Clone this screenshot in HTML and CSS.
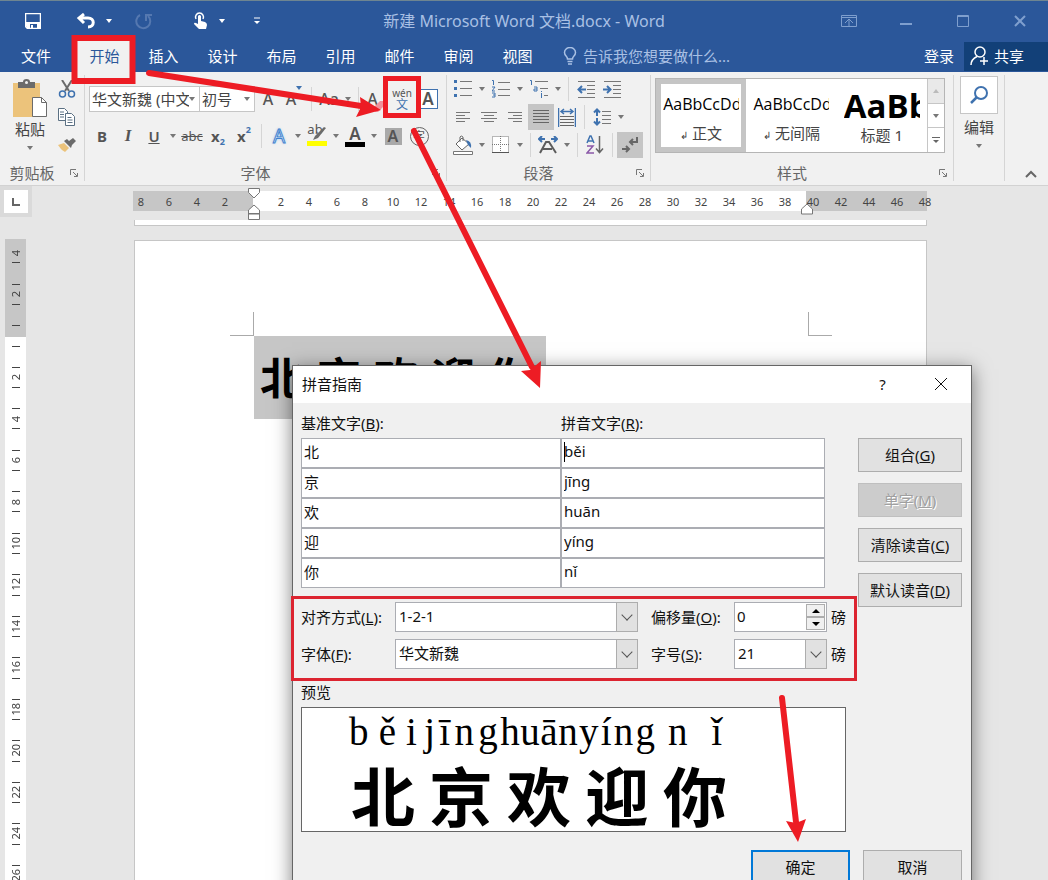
FILE: index.html
```html
<!DOCTYPE html>
<html lang="zh-CN">
<head>
    <meta charset="UTF-8">
    <meta name="viewport" content="width=device-width, initial-scale=1.0">
    <title>新建 Microsoft Word 文档.docx - Word</title>
    <link rel="stylesheet" href="styles.css">
</head>
<body>
<div class="app">

    <header class="titlebar">
        <div class="quick">
            <button class="q-save" aria-label="保存"><svg width="16" height="16" viewBox="0 0 16 16"><path d="M.5.5h15v15h-13l-2-2z" fill="none" stroke="#fff" stroke-width="1.500"/><path d="M1 9h14v6h-3v-4H5v4H2l-1-2z" fill="#fff"/><path d="M6 12h2v3H6z" fill="#fff"/></svg></button>
            <button class="q-undo" aria-label="撤消"><svg width="20" height="16" viewBox="0 0 20 16"><path d="M8 1L3 5l5 5M3 5h9c7 0 7 9 0 9" fill="none" stroke="#fff" stroke-width="3"/></svg></button>
            <button class="q-caret" aria-label="撤消选项"><i class="caret"></i></button>
            <button class="q-redo" aria-label="重复"><svg width="18" height="18" viewBox="0 0 18 18"><path d="M5 3a7 7 0 1 0 8 1M11 9V3h6" fill="none" stroke="#5578b0" stroke-width="2"/></svg></button>
            <button class="q-touch" aria-label="触摸模式"><svg width="14" height="18" viewBox="0 0 14 18"><path d="M2 7a4 4 0 1 1 7 0" fill="none" stroke="#fff" stroke-width="1.500"/><path d="M4 4q1.500-2 3 0v5l4 1q2 1 2 3l-1 4H5l-5-5q0-2 2-1l2 1z" fill="#fff"/></svg></button>
            <button class="q-caret" aria-label="触摸选项"><i class="caret"></i></button>
            <button class="q-more" aria-label="自定义"><svg width="8" height="8" viewBox="0 0 8 8"><path d="M1 1h6" stroke="#fff"/><path d="M1 4h6l-3 3z" fill="#fff"/></svg></button>
        </div>
        <span class="doc-title">新建 Microsoft Word 文档.docx - Word</span>
        <div class="win-buttons">
            <button aria-label="功能区显示选项"><svg width="16" height="14" viewBox="0 0 16 14"><path d="M.5 1.500h15v11H.5zM1 3.500h14M8 12V5M4 9l4-4 4 4" fill="none" stroke="#7f9fce"/></svg></button>
            <button aria-label="最小化"><svg width="14" height="14" viewBox="0 0 14 14"><path d="M1 10h12" stroke="#7f9fce" stroke-width="2"/></svg></button>
            <button aria-label="最大化"><svg width="14" height="14" viewBox="0 0 14 14"><path d="M1.500 1.500h11v11h-11zM1 2.500h12" fill="none" stroke="#7f9fce"/></svg></button>
            <button aria-label="关闭"><svg width="14" height="14" viewBox="0 0 14 14"><path d="M2 2l10 10M12 2L2 12" stroke="#7f9fce" stroke-width="2"/></svg></button>
        </div>
    </header>

    <nav class="tabs">
        <button class="file">文件</button>
        <button class="active">开始</button>
        <button>插入</button>
        <button>设计</button>
        <button>布局</button>
        <button>引用</button>
        <button>邮件</button>
        <button>审阅</button>
        <button>视图</button>
        <a class="tell-me" href="#"><svg width="14" height="18" viewBox="0 0 14 18"><path d="M4.500 12c0-3-3-3-3-6.500a5.500 5 0 0 1 11 0c0 3.500-3 3.500-3 6.500zM4.500 14.500h5M5 17h4" fill="none" stroke="#a9c0e4" stroke-width="1.500"/></svg>告诉我您想要做什么...</a>
        <a class="login" href="#">登录</a>
        <button class="share"><svg width="19" height="20" viewBox="0 0 19 20"><circle cx="10" cy="6" r="5" fill="none" stroke="#fff" stroke-width="1.500"/><path d="M1 19c0-5 3-7 6-8.500M14 11v8M10 15h8" fill="none" stroke="#fff" stroke-width="1.500"/></svg>共享</button>
    </nav>

    <section class="ribbon">
        <!-- 剪贴板 -->
        <div class="group clipboard">
            <div class="content">
                <button class="paste">
                    <svg width="36" height="40" viewBox="0 0 36 40"><path d="M1 4h27v34H1z" fill="#ecc37b"/><path d="M6 3h5q0-3 3.500-3T18 3h5v6H6z" fill="#6b6b6b"/><circle cx="14.500" cy="3.500" r="1.500" fill="#f1f1f1"/><path d="M20.500 18.500h9l5 5v14h-14z" fill="#fff" stroke="#6b6b6b"/><path d="M29.500 18.500v5h5" fill="none" stroke="#6b6b6b"/></svg>
                    <span>粘贴</span>
                    <i class="caret"></i>
                </button>
                <div class="clip-tools">
                    <button aria-label="剪切"><svg width="18" height="18" viewBox="0 0 18 18"><path d="M4 0l7 11M14 0L7 11" stroke="#6b6b6b" stroke-width="2"/><circle cx="4.500" cy="14" r="3" fill="none" stroke="#3f72af" stroke-width="1.500"/><circle cx="13.500" cy="14" r="3" fill="none" stroke="#3f72af" stroke-width="1.500"/></svg></button>
                    <button aria-label="复制"><svg width="18" height="18" viewBox="0 0 18 18"><path d="M.5.5h6l3 3v9h-9zM2 4h4M2 6.500h4M2 9h4" fill="#fff" stroke="#5b7083"/><path d="M7.500 5.500h6l3 3v9h-9zM9.500 9.500h4M9.500 12h5M9.500 14.500h5" fill="#fff" stroke="#5b7083"/></svg></button>
                    <button aria-label="格式刷"><svg width="18" height="16" viewBox="0 0 18 16"><path d="M0 8l6-2 5 5-4 4-3-2-1-1z" fill="#ecc37b"/><path d="M6 4l7 7 1-3 4-4-3-3-4 3-2-2z" fill="#6b6b6b"/></svg></button>
                </div>
            </div>
            <div class="label"><span>剪贴板</span><button class="launcher" aria-label="剪贴板选项"><svg width="8" height="8" viewBox="0 0 8 8"><path d="M.5 6V.5H6M3 3l4 4M7.500 4v3.500H4" fill="none" stroke="#777"/></svg></button></div>
        </div>

        <!-- 字体 -->
        <div class="group font">
            <div class="content">
                <div class="row">
                    <div class="combo name"><input type="text" value="华文新魏 (中文正文)" aria-label="字体"><i class="caret"></i></div>
                    <div class="combo size"><input type="text" value="初号" aria-label="字号"><i class="caret"></i></div>
                    <button class="ico letter" aria-label="增大字号">A</button>
                    <button class="ico letter shrink" aria-label="减小字号">A<svg width="6" height="4" viewBox="0 0 6 4"><path d="M0 0h6L3 4z" fill="#3f72af"/></svg></button>
                    <span class="sep"></span>
                    <button class="ico letter">Aa</button><button class="drop" aria-label="更改大小写"><i class="caret"></i></button>
                    <span class="sep"></span>
                    <button class="ico letter clear" aria-label="清除格式">A<svg width="12" height="12" viewBox="0 0 12 12"><path d="M0 8l7-7h5v4l-7 7H2z" fill="#f1919b"/></svg></button>
                    <button class="ico pinyin"><span>wén</span><span class="wen">文</span></button>
                    <button class="ico" aria-label="字符边框"><span class="boxed">A</span></button>
                </div>
                <div class="row">
                    <button class="ico bold">B</button>
                    <button class="ico italic">I</button>
                    <button class="ico under">U</button><button class="drop" aria-label="下划线选项"><i class="caret"></i></button>
                    <button class="ico strike">abc</button>
                    <button class="ico script">x<sub>2</sub></button>
                    <button class="ico script">x<sup>2</sup></button>
                    <span class="sep"></span>
                    <button class="ico effect">A</button><button class="drop" aria-label="文本效果选项"><i class="caret"></i></button>
                    <button class="ico mark"><span>ab</span><svg width="20" height="20" viewBox="0 0 20 20"><path d="M19 2l-8 10-5 2 2-4 9-9z" fill="#6b6b6b"/><path d="M0 15h20v5H0z" fill="#ff0"/></svg></button><button class="drop" aria-label="突出显示颜色"><i class="caret"></i></button>
                    <button class="ico"><span class="color">A</span></button><button class="drop" aria-label="字体颜色选项"><i class="caret"></i></button>
                    <button class="ico"><span class="shade">A</span></button>
                    <button class="ico"><span class="circled">字</span></button>
                </div>
            </div>
            <div class="label"><span>字体</span><button class="launcher" aria-label="字体设置"><svg width="8" height="8" viewBox="0 0 8 8"><path d="M.5 6V.5H6M3 3l4 4M7.500 4v3.500H4" fill="none" stroke="#777"/></svg></button></div>
        </div>

        <!-- 段落 -->
        <div class="group para">
            <div class="content">
                <div class="row">
                    <button class="ico" aria-label="项目符号"><svg width="18" height="18" viewBox="0 0 18 18"><path d="M0 0h3v3H0zM0 7h3v3H0zM0 14h3v3H0z" fill="#3f72af"/><path d="M6 1.500h12M6 8.500h12M6 15.500h12" stroke="#777"/></svg></button><button class="drop" aria-label="项目符号库"><i class="caret"></i></button>
                    <button class="ico" aria-label="编号"><svg width="18" height="18" viewBox="0 0 18 18"><path d="M0 .5h1.500V5M0 7h3l-3 4h3M0 13h3v4H0m1-2h2" fill="none" stroke="#3f72af"/><path d="M6 2.500h12M6 9.500h12M6 15.500h12" stroke="#777"/></svg></button><button class="drop" aria-label="编号库"><i class="caret"></i></button>
                    <button class="ico" aria-label="多级列表"><svg width="18" height="18" viewBox="0 0 18 18"><path d="M0 .5h1.500V5M4 7h3v4H4V9h3M11.500 11v1m0 1v5" fill="none" stroke="#3f72af"/><path d="M5 1.500h13M10 8.500h8M14 15.500h4" stroke="#777"/></svg></button><button class="drop" aria-label="多级列表库"><i class="caret"></i></button>
                    <span class="sep"></span>
                    <button class="ico" aria-label="减少缩进量"><svg width="18" height="17" viewBox="0 0 18 17"><path d="M1 .5h17M10 4.500h8M10 8.500h8M10 12.500h8M1 16.500h17" stroke="#777"/><path d="M9 8.500H2M5 5L1.500 8.500 5 12" fill="none" stroke="#3f72af" stroke-width="2"/></svg></button>
                    <button class="ico" aria-label="增加缩进量"><svg width="18" height="17" viewBox="0 0 18 17"><path d="M1 .5h17M10 4.500h8M10 8.500h8M10 12.500h8M1 16.500h17" stroke="#777"/><path d="M0 8.500h7M4 5l3.500 3.500L4 12" fill="none" stroke="#3f72af" stroke-width="2"/></svg></button>
                </div>
                <div class="row">
                    <button class="ico" aria-label="左对齐"><svg width="16" height="12" viewBox="0 0 16 12"><path d="M1 1.500h14M1 4.500h9M1 7.500h14M1 10.500h9" stroke="#777"/></svg></button>
                    <button class="ico" aria-label="居中"><svg width="16" height="12" viewBox="0 0 16 12"><path d="M0 1.500h16M3 4.500h10M0 7.500h16M3 10.500h10" stroke="#777"/></svg></button>
                    <button class="ico" aria-label="右对齐"><svg width="16" height="12" viewBox="0 0 16 12"><path d="M1 1.500h14M6 4.500h9M1 7.500h14M6 10.500h9" stroke="#777"/></svg></button>
                    <button class="ico on" aria-label="两端对齐"><svg width="16" height="14" viewBox="0 0 16 14"><path d="M0 .5h16M0 3.500h16M0 6.500h16M0 9.500h16M0 12.500h16" stroke="#666"/></svg></button>
                    <button class="ico" aria-label="分散对齐"><svg width="18" height="19" viewBox="0 0 18 19"><path d="M.5 0v19M17.500 0v19M4 3.500h10M6 1L3 3.500 6 6M12 1l3 2.500L12 6" fill="none" stroke="#3f72af" stroke-width="1.500"/><path d="M2 8.500h14M2 11.500h14M2 14.500h14M2 17.500h14" stroke="#666"/></svg></button>
                    <span class="sep"></span>
                    <button class="ico" aria-label="行距"><svg width="18" height="18" viewBox="0 0 18 18"><path d="M4 2v6M1 4.500l3-3 3 3M4 10v6M1 13.500l3 3 3-3" fill="none" stroke="#3f72af" stroke-width="2"/><path d="M9 3.500h9M9 7.500h9M9 11.500h9M9 15.500h9" stroke="#777"/></svg></button><button class="drop" aria-label="行距选项"><i class="caret"></i></button>
                </div>
                <div class="row">
                    <button class="ico" aria-label="底纹"><svg width="20" height="20" viewBox="0 0 20 20"><path d="M9 3l7 6-7 6-6-6zM7 7V2q1-2 3 0v4" fill="#fff" stroke="#666"/><path d="M13 5q6 1 5 8l-3-3z" fill="#3f72af"/><path d="M.5 16.500h19v3H.5z" fill="#fff" stroke="#777"/></svg></button><button class="drop" aria-label="底纹选项"><i class="caret"></i></button>
                    <button class="ico" aria-label="边框"><svg width="18" height="18" viewBox="0 0 18 18"><path d="M.5.5h16v16H.5zM8.500 0v16M0 8.500h17" fill="#fff" stroke="#777" stroke-dasharray="1 1"/><path d="M0 16.500h17" stroke="#555"/></svg></button><button class="drop" aria-label="边框选项"><i class="caret"></i></button>
                    <span class="sep"></span>
                    <button class="ico" aria-label="中文版式"><svg width="20" height="18" viewBox="0 0 20 18"><path d="M1 3h6M4 0L1 3l3 3M13 3h6M16 0l3 3-3 3" fill="none" stroke="#3f72af" stroke-width="2"/><path d="M2 17l6-11h3l7 11M5 13h9" fill="none" stroke="#5c5c5c" stroke-width="2"/></svg></button><button class="drop" aria-label="中文版式选项"><i class="caret"></i></button>
                    <span class="sep"></span>
                    <button class="ico" aria-label="排序"><svg width="18" height="20" viewBox="0 0 18 20"><path d="M1 8l3-7h1l3 7M2 6h5" fill="none" stroke="#3f72af" stroke-width="1.500"/><path d="M1 11h6l-6 7h7" fill="none" stroke="#8a58a8" stroke-width="1.500"/><path d="M13.500 1v16M10 13.500l3.500 4 3.500-4" fill="none" stroke="#666" stroke-width="1.500"/></svg></button>
                    <span class="sep"></span>
                    <button class="ico on" aria-label="显示编辑标记"><svg width="18" height="16" viewBox="0 0 18 16"><path d="M16 0v5H9M12 2L9 5l3 3M1 12h7M5 9l3 3-3 3" fill="none" stroke="#666" stroke-width="2"/></svg></button>
                </div>
            </div>
            <div class="label"><span>段落</span><button class="launcher" aria-label="段落设置"><svg width="8" height="8" viewBox="0 0 8 8"><path d="M.5 6V.5H6M3 3l4 4M7.500 4v3.500H4" fill="none" stroke="#777"/></svg></button></div>
        </div>

        <!-- 样式 -->
        <div class="group styles">
            <div class="content">
                <div class="gallery">
                    <button class="style selected"><span class="sample">AaBbCcDd</span><span class="style-name"><small>↲</small> 正文</span></button>
                    <button class="style"><span class="sample">AaBbCcDd</span><span class="style-name"><small>↲</small> 无间隔</span></button>
                    <button class="style"><span class="sample big">AaBb</span><span class="style-name">标题 1</span></button>
                    <div class="scroller">
                        <button class="off" aria-label="上一行"><i class="caret up"></i></button>
                        <button aria-label="下一行"><i class="caret"></i></button>
                        <button aria-label="其他"><svg width="8" height="7" viewBox="0 0 8 7"><path d="M0 .5h8" stroke="#666"/><path d="M1 3h6L4 6z" fill="#666"/></svg></button>
                    </div>
                </div>
            </div>
            <div class="label"><span>样式</span><button class="launcher" aria-label="样式窗格"><svg width="8" height="8" viewBox="0 0 8 8"><path d="M.5 6V.5H6M3 3l4 4M7.500 4v3.500H4" fill="none" stroke="#777"/></svg></button></div>
        </div>

        <div class="group edit">
            <button class="find">
                <span class="find-icon"><svg width="20" height="20" viewBox="0 0 20 20"><circle cx="12" cy="8" r="6" fill="none" stroke="#3f72af" stroke-width="2"/><path d="M8 12l-6 6" stroke="#3f72af" stroke-width="2.500"/></svg></span>
                <span>编辑</span>
                <i class="caret"></i>
            </button>
        </div>
        <button class="collapse" aria-label="折叠功能区"><svg width="12" height="8" viewBox="0 0 12 8"><path d="M1 7l5-5 5 5" fill="none" stroke="#666" stroke-width="2"/></svg></button>
    </section>

    <main class="workspace">
        <aside class="side">
            <button class="tab-stop" aria-label="制表符"><svg width="8" height="8" viewBox="0 0 8 8"><path d="M1 0v7h7" fill="none" stroke="#666" stroke-width="2"/></svg></button>
            <div class="v-ruler"><div class="v-marks" id="vMarks"></div></div>
        </aside>
        <div class="canvas">
            <div class="h-ruler">
                <div class="h-marks" id="hMarks"></div>
                <svg class="indent left" width="12" height="32" viewBox="0 0 12 32"><path d="M.5.500h11v4L6 10 .5 4.500zM6 17l5.500 5v4H.5v-4zM.5 25.500h11v6H.5z" fill="#fff" stroke="#777"/></svg>
                <svg class="indent right" width="12" height="12" viewBox="0 0 12 12"><path d="M6 1l5.500 5v5H.5V6z" fill="#fff" stroke="#777"/></svg>
            </div>
            <div class="sheet-end"></div>
            <div class="sheet">
                <div class="crop"><span class="crop-left"></span><span class="crop-right"></span></div>
                <p class="selection"><span>北</span><span>京</span><span>欢</span><span>迎</span><span>你</span></p>
            </div>
        </div>
    </main>

    <div class="dialog" role="dialog" aria-labelledby="dlgTitle">
        <div class="dlg-title">
            <span id="dlgTitle">拼音指南</span>
            <button>?</button>
            <button aria-label="关闭对话框"><svg width="14" height="14" viewBox="0 0 14 14"><path d="M1 1l12 12M13 1L1 13" stroke="#111"/></svg></button>
        </div>
        <div class="dlg-body">
            <div class="dlg-main">
                <div class="pairs">
                    <label for="base1">基准文字(<u>B</u>):</label>
                    <label for="py1">拼音文字(<u>R</u>):</label>
                    <input type="text" id="base1" value="北"><div class="first"><input type="text" id="py1" value="běi"></div>
                    <input type="text" aria-label="基准文字 2" value="京"><input type="text" aria-label="拼音文字 2" value="jīng">
                    <input type="text" aria-label="基准文字 3" value="欢"><input type="text" aria-label="拼音文字 3" value="huān">
                    <input type="text" aria-label="基准文字 4" value="迎"><input type="text" aria-label="拼音文字 4" value="yíng">
                    <input type="text" aria-label="基准文字 5" value="你"><input type="text" aria-label="拼音文字 5" value="nǐ">
                </div>

                <div class="options">
                    <label for="align">对齐方式(<u>L</u>):</label>
                    <div class="select"><select id="align"><option>1-2-1</option></select></div>
                    <label class="second" for="offset">偏移量(<u>O</u>):</label>
                    <div class="spin">
                        <input type="number" id="offset" value="0">
                        <div class="spin-buttons">
                            <button aria-label="增加"><svg width="8" height="4" viewBox="0 0 8 4"><path d="M0 4l4-4 4 4z"/></svg></button>
                            <button aria-label="减少"><svg width="8" height="4" viewBox="0 0 8 4"><path d="M0 0l4 4 4-4z"/></svg></button>
                        </div>
                    </div>
                    <span class="unit">磅</span>

                    <label for="face">字体(<u>F</u>):</label>
                    <div class="select"><select id="face"><option>华文新魏</option></select></div>
                    <label class="second" for="points">字号(<u>S</u>):</label>
                    <div class="select"><select id="points"><option>21</option></select></div>
                    <span class="unit">磅</span>
                </div>

                <div class="preview-label">预览</div>
                <div class="preview">
                    <div class="syllable"><div class="py"><span>b</span><span>ě</span><span>i</span></div><div class="hz">北</div></div>
                    <div class="syllable"><div class="py"><span>j</span><span>ī</span><span>n</span><span>g</span></div><div class="hz">京</div></div>
                    <div class="syllable"><div class="py"><span>h</span><span>u</span><span>ā</span><span>n</span></div><div class="hz">欢</div></div>
                    <div class="syllable"><div class="py"><span>y</span><span>í</span><span>n</span><span>g</span></div><div class="hz">迎</div></div>
                    <div class="syllable"><div class="py"><span>n</span><span>ǐ</span></div><div class="hz">你</div></div>
                </div>
            </div>
            <div class="dlg-side">
                <button class="btn">组合(<u>G</u>)</button>
                <button class="btn" disabled>单字(<u>M</u>)</button>
                <button class="btn">清除读音(<u>C</u>)</button>
                <button class="btn">默认读音(<u>D</u>)</button>
            </div>
        </div>
        <div class="dlg-footer">
            <button class="btn default">确定</button>
            <button class="btn">取消</button>
        </div>
    </div>

    <!-- red step marks over the window -->
    <svg class="steps" width="1048" height="880" viewBox="0 0 1048 880">
        <g fill="none" stroke="#ed1c24">
            <rect x="74.500" y="38" width="58" height="43" stroke-width="6"/>
            <rect x="385.500" y="78.500" width="33" height="37" stroke-width="5"/>
            <rect x="292.500" y="597.500" width="563" height="82" stroke="#dc2430" stroke-width="3"/>
            <path d="M149 73l212 33M414 131l118 236M782 698l14 124" stroke-width="6" stroke-linecap="round"/>
        </g>
        <path d="M381 110l-21-13 1 10-5 10zM540 388l-19-17 9-1 11-9zM798 842l-12-21 10 2 10-4z" fill="#ed1c24"/>
    </svg>
</div>

<script>
    // horizontal ruler: 8 to 0 in the margin, then up to 48
    const hMarks = document.getElementById('hMarks');
    for (let n = -8; n <= 48; n += 2) {
        const mark = document.createElement('span');
        mark.textContent = n === 0 ? '' : Math.abs(n);
        hMarks.appendChild(mark);
    }

    // vertical ruler
    const vMarks = document.getElementById('vMarks');
    for (let n = -4; n <= 26; n += 2) {
        const mark = document.createElement('div');
        const text = document.createElement('span');
        text.textContent = n === 0 ? '' : Math.abs(n);
        mark.appendChild(text);
        vMarks.appendChild(mark);
    }
</script>
</body>
</html>
```
FILE: styles.css
```css
*, *::before, *::after {
    box-sizing: border-box;
}
body {
    margin: 0;
    font-family: "Noto Sans", "Noto Sans CJK SC", sans-serif;
    font-size: 15px;
    line-height: 20px;
    color: #111;
}
button, input, select {
    font: inherit;
    color: inherit;
    margin: 0;
    padding: 0;
    border: 0;
    background: none;
    border-radius: 0;
    outline: none;
}
a {
    color: inherit;
    text-decoration: none;
}
svg {
    display: block;
    flex: none;
}

.app {
    position: relative;
    display: flex;
    flex-direction: column;
    height: 100vh;
    overflow: hidden;
    background: #e6e6e6;
}
.caret {
    display: block;
    flex: none;
    border: 3px solid transparent;
    border-top: 4px solid #777;
    border-bottom: 0;
}
.caret.up {
    border-top: 0;
    border-bottom: 4px solid #bbb;
}

/* title bar */
.titlebar {
    display: grid;
    grid-template-columns: 1fr auto 1fr;
    align-items: center;
    height: 40px;
    flex: none;
    background: #2b579a;
    border-top: 1px solid #6e8591;
}
.titlebar button {
    display: flex;
    justify-content: center;
    align-items: center;
    height: 34px;
}
.quick {
    display: flex;
    padding-left: 13px;
}
.q-save {
    width: 40px;
}
.quick .q-undo {
    width: 46px;
    padding-left: 20px;
}
.q-caret {
    width: 20px;
}
.q-redo, .q-more {
    width: 50px;
}
.quick .q-touch {
    width: 43px;
    padding-left: 20px;
}
.quick .caret {
    border-top-color: #fff;
}
.doc-title {
    font-size: 16px;
    color: #a9c0e4;
}
.win-buttons {
    display: flex;
    justify-content: flex-end;
}
.win-buttons button {
    width: 57px;
}

/* tabs */
.tabs {
    display: flex;
    height: 32px;
    flex: none;
    background: #2b579a;
    color: #fff;
}
.tabs button {
    width: 59px;
    padding-bottom: 1px;
}
.tabs .file {
    width: 75px;
    padding-right: 3px;
}
.tabs .active {
    background: #f1f1f1;
    color: #2b579a;
}
.tell-me {
    display: flex;
    align-items: center;
    gap: 6px;
    padding-left: 16px;
    color: #a9c0e4;
}
.login {
    display: flex;
    align-items: center;
    margin-left: auto;
    padding: 0 10px;
}
.tabs .share {
    display: flex;
    align-items: center;
    gap: 5px;
    width: 84px;
    padding: 0 0 2px 6px;
    margin: 2px 0 1px;
    background: #124078;
}

/* ribbon */
.ribbon {
    display: flex;
    flex: none;
    height: 114px;
    padding: 3px 0 4px;
    background: #f1f1f1;
    border-bottom: 1px solid #d2d2d2;
    color: #444;
}
.group {
    display: flex;
    flex-direction: column;
    border-right: 1px solid #d5d5d5;
}
.content {
    flex: 1;
}
.label {
    display: flex;
    align-items: center;
    line-height: 16px;
    color: #666;
}
.label span {
    flex: 1;
    padding-right: 6px;
    text-align: center;
}
.launcher {
    margin-right: 6px;
}
.row {
    display: flex;
    align-items: center;
}
.ico {
    display: flex;
    justify-content: center;
    align-items: center;
    width: 26px;
    height: 26px;
    color: #555;
}
.ico.on {
    background: #c5c5c5;
}
.drop {
    display: flex;
    justify-content: center;
    width: 12px;
}
.sep {
    width: 1px;
    height: 24px;
    margin: 0 4px;
    background: #d5d5d5;
}

.clipboard {
    width: 85px;
}
.clipboard .content {
    display: flex;
}
.paste {
    display: flex;
    flex-direction: column;
    align-items: center;
    width: 56px;
    padding-top: 4px;
    padding-left: 4px;
}
.paste .caret {
    margin-top: 7px;
}
.clip-tools button {
    display: flex;
    align-items: center;
    justify-content: center;
    width: 22px;
    height: 28px;
}

.font {
    width: 362px;
}
.font .content {
    display: flex;
    flex-direction: column;
    gap: 11px;
    padding: 11px 0 0 4px;
}
.combo {
    display: flex;
    align-items: center;
    height: 26px;
    padding: 0 4px 0 2px;
    background: #fff;
    border: 1px solid #c6c6c6;
}
.combo input {
    flex: 1;
    min-width: 0;
}
.combo.name {
    width: 111px;
}
.combo.size {
    width: 56px;
    margin-left: -1px;
}
.letter {
    font-size: 16px;
    font-weight: 500;
}
.shrink svg {
    align-self: flex-start;
}
.clear svg {
    align-self: flex-end;
    margin-left: -5px;
}
.pinyin {
    flex-direction: column;
    font-size: 10px;
    line-height: 10px;
}
.wen {
    font-size: 12px;
    line-height: 13px;
    color: #3f72af;
}
.boxed {
    width: 19px;
    border: 1px solid #3f72af;
    background: #fff;
    font-size: 17px;
    font-weight: 600;
    line-height: 18px;
}
.bold {
    font-weight: 700;
}
.italic {
    font-family: "Liberation Serif", serif;
    font-size: 17px;
    font-style: italic;
    font-weight: 700;
}
.under {
    font-weight: 600;
    text-decoration: underline;
}
.strike {
    font-size: 13px;
    text-decoration: line-through;
}
.script {
    font-weight: 700;
}
.script sub, .script sup {
    font-size: 9px;
    line-height: 14px;
    color: #3f72af;
}
.script sub {
    align-self: flex-end;
}
.script sup {
    align-self: flex-start;
}
.effect {
    font-size: 19px;
    color: #fff;
    -webkit-text-stroke: 1px #3f82cf;
    text-shadow: 0 0 3px #8ab8ea;
}
.mark {
    position: relative;
    font-size: 13px;
}
.mark span {
    align-self: flex-start;
    padding-right: 4px;
    line-height: 12px;
}
.mark svg {
    position: absolute;
    left: 3px;
    top: 3px;
}
.color {
    width: 20px;
    border-bottom: 5px solid #000;
    font-size: 17px;
    font-weight: 600;
    line-height: 17px;
}
.shade {
    width: 17px;
    background: #a9a9a9;
    font-size: 16px;
    font-weight: 600;
    line-height: 17px;
}
.circled {
    width: 19px;
    border: 1px solid #666;
    border-radius: 50%;
    font-size: 12px;
    line-height: 17px;
}

.para {
    width: 204px;
}
.para .content {
    padding-left: 3px;
}
.para .row {
    height: 28px;
}
.para .drop {
    width: 12px;
}

.styles {
    width: 303px;
}
.styles .content {
    padding: 3px 8px 0 4px;
}
.gallery {
    display: flex;
    height: 75px;
    background: #fff;
    border: 1px solid #b5b5b5;
}
.style {
    display: flex;
    flex-direction: column;
    justify-content: flex-end;
    align-items: center;
    flex: 1;
    min-width: 0;
    padding: 0 2px 2px;
    border: 5px solid transparent;
}
.style.selected {
    border-color: #c5c5c5;
}
.sample {
    width: 76px;
    overflow: hidden;
    white-space: nowrap;
    text-align: left;
    font-family: "Open Sans", sans-serif;
    font-size: 16px;
    line-height: 38px;
    color: #000;
}
.sample.big {
    font-size: 33px;
    font-weight: 700;
    line-height: 44px;
}
.style-name small {
    font-size: 10px;
}
.scroller {
    display: flex;
    flex-direction: column;
    width: 17px;
    border-left: 1px solid #c6c6c6;
}
.scroller button {
    display: flex;
    flex: 1;
    align-items: center;
    justify-content: center;
    border-bottom: 1px solid #c6c6c6;
}
.scroller button:last-child {
    border-bottom: 0;
}
.scroller .off {
    background: #e9e9e9;
}

.edit {
    width: 51px;
}
.find {
    display: flex;
    flex-direction: column;
    align-items: center;
    gap: 3px;
    padding-top: 1px;
}
.find-icon {
    display: flex;
    align-items: center;
    justify-content: center;
    width: 38px;
    height: 38px;
    background: #fff;
    border: 1px solid #c6c6c6;
}
.find .caret {
    margin-top: 4px;
}
.collapse {
    align-self: flex-end;
    margin-left: auto;
    padding: 0 11px 3px;
}

/* rulers and sheets */
.workspace {
    display: flex;
    flex: 1;
    min-height: 0;
}
.side {
    display: flex;
    flex-direction: column;
    width: 32px;
    flex: none;
}
.tab-stop {
    display: flex;
    align-items: center;
    justify-content: center;
    height: 31px;
    border: 4px solid #dadada;
    background: #fff;
}
.v-ruler {
    flex: 1;
    min-height: 0;
    width: 21px;
    margin: 22px 0 0 5px;
    overflow: hidden;
    background: linear-gradient(#c6c6c6 98px, #fff 98px);
}
.v-marks {
    display: grid;
    grid-auto-rows: 1fr;
    height: 664px;
    margin-top: -7px;
    font-size: 11px;
    line-height: 12px;
    color: #444;
}
.v-marks div {
    display: flex;
    flex-direction: column;
    align-items: center;
    justify-content: space-between;
    padding: 10px 0;
}
.v-marks div::before, .v-marks div::after {
    content: "";
    width: 8px;
    height: 1px;
    background: #444;
}
.v-marks div:first-child::before {
    background: none;
}
.v-marks span {
    writing-mode: vertical-rl;
    transform: rotate(180deg);
}
.canvas {
    display: flex;
    flex-direction: column;
    width: 794px;
    margin-left: 101px;
}
.h-ruler {
    position: relative;
    height: 20px;
    flex: none;
    margin-top: 5px;
    background: linear-gradient(90deg, #c6c6c6 120px, #fff 120px, #fff 673px, #c6c6c6 673px);
}
.h-marks {
    display: flex;
    margin-left: -6px;
    font-size: 11px;
    line-height: 22px;
    color: #444;
}
.h-marks span {
    width: 28px;
    flex: none;
    text-align: center;
}
.indent {
    position: absolute;
}
.indent.left {
    left: 115px;
    top: -3px;
}
.indent.right {
    left: 668px;
    top: 12px;
}
.sheet-end {
    height: 6px;
    flex: none;
    margin: 9px 0 14px 1px;
    background: #fff;
    border: 1px solid #c6c6c6;
    border-top: 0;
}
.sheet {
    flex: 1;
    margin-left: 1px;
    padding: 71px 94px 0 95px;
    background: #fff;
    border: 1px solid #c6c6c6;
    border-bottom: 0;
}
.crop {
    display: flex;
    justify-content: space-between;
    height: 24px;
}
.crop span {
    width: 24px;
    border-bottom: 1px solid #aaa;
}
.crop .crop-left {
    border-right: 1px solid #aaa;
}
.crop .crop-right {
    border-left: 1px solid #aaa;
}
.selection {
    display: flex;
    width: 292px;
    height: 83px;
    margin: 0 0 0 24px;
    padding-left: 6px;
    background: #c6c6c6;
    font-family: "Noto Sans CJK SC", sans-serif;
    font-size: 44px;
    font-weight: 700;
    line-height: 80px;
    color: #000;
}
.selection span {
    width: 57px;
}

/* pinyin dialog */
.dialog {
    position: absolute;
    left: 292px;
    top: 365px;
    width: 680px;
    background: #f0f0f0;
    border: 1px solid #666;
    box-shadow: 0 4px 18px rgba(0, 0, 0, 0.5);
}
.dlg-title {
    display: flex;
    align-items: center;
    height: 37px;
    padding: 0 1px 2px 9px;
    background: #fff;
}
.dlg-title span {
    flex: 1;
}
.dlg-title button {
    display: flex;
    justify-content: center;
    width: 57px;
}
.dlg-title button:last-child {
    width: 59px;
}
.dlg-body {
    display: flex;
    gap: 12px;
    padding: 10px 9px 0 8px;
}
.dlg-main {
    flex: 1;
}
.dlg-side {
    display: flex;
    flex-direction: column;
    gap: 11px;
    width: 104px;
    padding-top: 25px;
}
.btn {
    height: 34px;
    background: #e1e1e1;
    border: 1px solid #adadad;
}
.btn:disabled {
    background: #ccc;
    border-color: #bfbfbf;
    color: #a0a0a0;
    text-shadow: 1px 1px #fff;
}
.pairs {
    display: grid;
    grid-template-columns: 260px 264px;
    grid-auto-rows: 30px;
    grid-template-rows: 25px;
}
.pairs input {
    width: 100%;
    height: 100%;
    padding: 0 2px 4px;
    background: #fff;
    border: 1px solid #abadb3;
}
.first {
    position: relative;
}
.first::before {
    content: "";
    position: absolute;
    left: 3px;
    top: 4px;
    width: 1px;
    height: 20px;
    background: #000;
}
.options {
    display: grid;
    grid-template-columns: 94px 243px 96px 93px 1fr;
    grid-auto-rows: 30px;
    row-gap: 7px;
    align-items: center;
    margin-top: 14px;
}
.second {
    padding-left: 13px;
}
.unit {
    padding-left: 4px;
}
.select {
    position: relative;
    height: 30px;
}
.select select {
    appearance: none;
    width: 100%;
    height: 100%;
    padding: 0 24px 3px 3px;
    background: #fff;
    border: 1px solid #abadb3;
}
.select::after {
    content: "";
    position: absolute;
    right: 0;
    top: 0;
    width: 22px;
    height: 30px;
    background: #e1e1e1;
    border: 1px solid #adadad;
    pointer-events: none;
}
.select::before {
    content: "";
    position: absolute;
    z-index: 1;
    right: 7px;
    top: 9px;
    width: 8px;
    height: 8px;
    border: solid #555;
    border-width: 0 1px 1px 0;
    transform: rotate(45deg);
    pointer-events: none;
}
.spin {
    display: flex;
    height: 30px;
    padding: 1px;
    background: #fff;
    border: 1px solid #abadb3;
}
.spin input {
    appearance: textfield;
    flex: 1;
    min-width: 0;
    padding: 0 1px 3px;
}
.spin-buttons {
    display: flex;
    flex-direction: column;
    width: 19px;
}
.spin-buttons button {
    display: flex;
    flex: 1;
    align-items: center;
    justify-content: center;
    background: #f0f0f0;
    border: 1px solid #adadad;
}
.preview-label {
    margin-top: 13px;
    line-height: 20px;
}
.preview {
    display: flex;
    height: 125px;
    margin-top: 5px;
    padding-left: 42px;
    overflow: hidden;
    background: #fff;
    border: 1px solid #666;
    color: #000;
}
.syllable {
    width: 78px;
}
.py {
    display: flex;
    justify-content: space-around;
    font-family: "Liberation Serif", serif;
    font-size: 39px;
    line-height: 48px;
}
.hz {
    font-family: "Noto Sans CJK SC", sans-serif;
    font-size: 64px;
    font-weight: 700;
    line-height: 75px;
    text-align: center;
}
.dlg-footer {
    display: flex;
    justify-content: flex-end;
    gap: 13px;
    padding: 18px 9px 12px;
}
.dlg-footer .btn {
    width: 99px;
}
.btn.default {
    border: 2px solid #0078d7;
}

.steps {
    position: absolute;
    left: 0;
    top: 0;
    pointer-events: none;
}
```
